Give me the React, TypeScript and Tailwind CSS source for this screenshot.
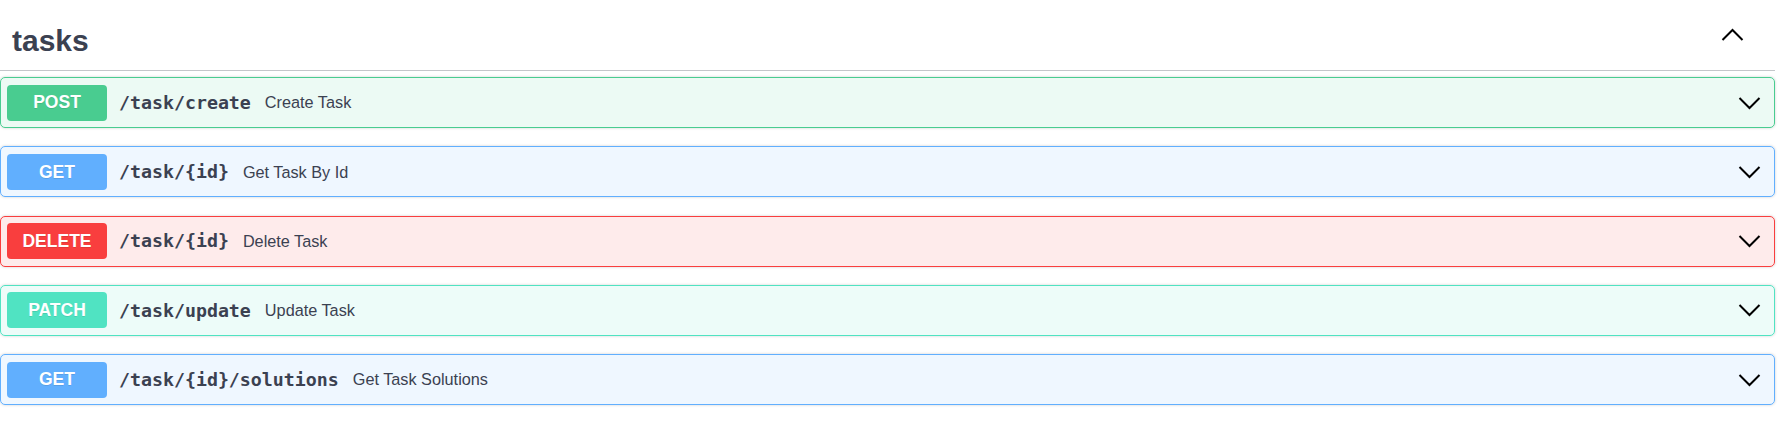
import React from "react";

type Op = {
  method: string;
  path: string;
  desc: string;
  border: string;
  bg: string;
  badge: string;
};

const ops: Op[] = [
  { method: "POST", path: "/task/create", desc: "Create Task", border: "border-[#49cc90]", bg: "bg-[rgba(73,204,144,0.1)]", badge: "bg-[#49cc90]" },
  { method: "GET", path: "/task/{id}", desc: "Get Task By Id", border: "border-[#61affe]", bg: "bg-[rgba(97,175,254,0.1)]", badge: "bg-[#61affe]" },
  { method: "DELETE", path: "/task/{id}", desc: "Delete Task", border: "border-[#f93e3e]", bg: "bg-[rgba(249,62,62,0.1)]", badge: "bg-[#f93e3e]" },
  { method: "PATCH", path: "/task/update", desc: "Update Task", border: "border-[#50e3c2]", bg: "bg-[rgba(80,227,194,0.1)]", badge: "bg-[#50e3c2]" },
  { method: "GET", path: "/task/{id}/solutions", desc: "Get Task Solutions", border: "border-[#61affe]", bg: "bg-[rgba(97,175,254,0.1)]", badge: "bg-[#61affe]" },
];

function Chevron({ up }: { up?: boolean }) {
  return (
    <svg width="23" height="14" viewBox="0 0 23 14" className="block">
      <polyline
        points={up ? "1.5,12 11.5,2 21.5,12" : "1.5,2 11.5,12 21.5,2"}
        fill="none"
        stroke="#000"
        strokeWidth="2"
      />
    </svg>
  );
}

export default function App() {
  return (
    <div className="w-[1775px] bg-white font-['Liberation_Sans',Arial,sans-serif] text-[#3b4151]">
      <div className="flex h-[71px] items-center justify-between border-b border-[rgba(59,65,81,0.3)] pl-[12px] pr-[31px]">
        <h3 className="mt-[12px] text-[30px] font-bold leading-none">tasks</h3>
        <Chevron up />
      </div>
      <div className="mt-[6px] flex flex-col">
        {ops.map((op, i) => (
          <div
            key={i}
            className={`mb-[18.25px] flex h-[51px] items-center rounded-[5px] border pl-[6px] pr-[13px] shadow-[0_0_3px_rgba(0,0,0,0.19)] ${op.border} ${op.bg}`}
          >
            <div
              className={`flex h-[36px] w-[100px] items-center justify-center rounded-[4px] text-[17.5px] font-bold text-white [text-shadow:0_1px_0_rgba(0,0,0,0.1)] ${op.badge}`}
            >
              {op.method}
            </div>
            <span className="pl-[12px] pr-[14px] font-['DejaVu_Sans_Mono',monospace] text-[18.25px] font-bold">
              {op.path}
            </span>
            <span className="flex-1 text-[16.25px]">{op.desc}</span>
            <Chevron />
          </div>
        ))}
      </div>
    </div>
  );
}
